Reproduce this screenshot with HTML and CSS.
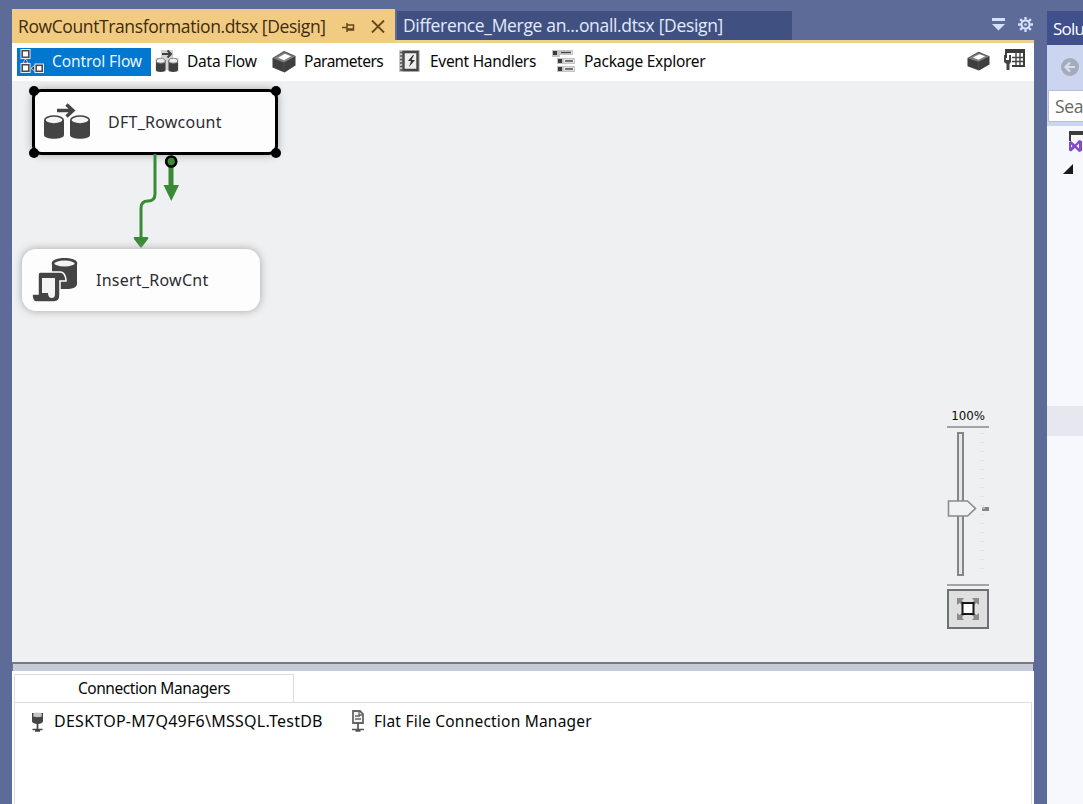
FILE: index.html
```html
<!DOCTYPE html>
<html lang="en">
<head>
<meta charset="utf-8">
<title>RowCountTransformation.dtsx [Design]</title>
<link rel="stylesheet" href="styles.css">
</head>
<body>
<svg class="defs" width="0" height="0" aria-hidden="true">
  <defs>
    <symbol id="box" viewBox="0 0 24 24">
      <path d="M.5 9 12 2l11.500 5v9.500l-11 7L.5 18.500z" fill="#3f3f3f"/>
      <path d="M1 9.300 12 3l11 4.500L12 13.500z" fill="#808080"/>
      <path d="M6 8.700 13 4.800l6 2.400-7 4z" fill="#fff"/>
      <path d="M12 13.500V23" stroke="#555" stroke-width=".7"/>
    </symbol>
    <symbol id="cylinders" viewBox="0 0 46 38">
      <path d="M0 17v15c0 5 20 5 20 0V17z" fill="#444"/>
      <ellipse cx="10" cy="17" rx="9.200" ry="4" fill="#f4f4f4" stroke="#444" stroke-width="1.600"/>
      <path d="M26 17v15c0 5 20 5 20 0V17z" fill="#444"/>
      <ellipse cx="36" cy="17" rx="9.200" ry="4" fill="#f4f4f4" stroke="#444" stroke-width="1.600"/>
      <path d="M13 7.500h15M22.500 1.500 29 7.500l-6.500 6" fill="none" stroke="#444" stroke-width="3.400"/>
    </symbol>
  </defs>
</svg>
<div class="ide">
  <main class="editor">
    <header class="tabs">
      <div class="tab active">
        <span class="title t1">RowCountTransformation.dtsx [Design]</span>
        <svg class="pin" width="13" height="11" viewBox="0 0 13 11"><path d="M0 5.500h5M5 1v9M5 3h6.500v5H5M5 7h7" fill="none" stroke="#664719" stroke-width="1.500"/></svg>
        <svg class="close" width="14" height="13" viewBox="0 0 14 13"><path d="m1 .5 12 12M13 .5l-12 12" stroke="#664719" stroke-width="1.900"/></svg>
      </div>
      <div class="tab inactive"><span class="title t2">Difference_Merge an...onall.dtsx [Design]</span></div>
      <div class="tab-actions">
        <svg width="13" height="13" viewBox="0 0 13 13"><path d="M0 0h13v3H0zM0 6h13l-6.500 6.500z" fill="#d4e0ff"/></svg>
        <svg width="15" height="15" viewBox="0 0 16 16"><g fill="none" stroke="#d4e0ff"><circle cx="8" cy="8" r="4.300" stroke-width="2.300"/><path d="M8 0v3M8 13v3M0 8h3M13 8h3M2.300 2.300l2.200 2.200M11.500 11.500l2.200 2.200M13.700 2.300l-2.200 2.200M4.500 11.500l-2.200 2.200" stroke-width="2.500"/></g><circle cx="8" cy="8" r="1.300" fill="#d4e0ff"/></svg>
      </div>
    </header>

    <nav class="toolbar">
      <div class="tool selected">
        <svg width="24" height="24" viewBox="0 0 24 24"><path d="M.5 0h10v10h-10zM.5 14h10v10h-10zM14.500 14.500h9.500V24h-9.500z" fill="#e4f1fa"/><path d="M2.200 1.700h6.600v6.600H2.200zM2.200 15.700h6.600v6.600H2.200zM16.200 16.200h6v6h-6z" fill="#fff" stroke="#4a4a4a" stroke-width="1.600"/><path d="M3 14l2.500-4L8 14zM14.500 16.500l-3.500 2.700 3.500 2.700z" fill="#333" stroke="#e4f1fa" stroke-width=".8"/></svg>
        <span class="tahoma w1">Control Flow</span>
      </div>
      <div class="tool flow">
        <svg width="24" height="24" viewBox="0 0 24 24"><path d="M6 1h12v8h5.500v13.500H13V21h-2v1.500H.5V9H6z" fill="#d2d2d2"/><path d="M1 11v10c0 2.500 9.500 2.500 9.500 0V11zM13.500 11v10c0 2.500 9.500 2.500 9.500 0V11z" fill="#3f3f3f"/><path d="M1.500 11.500c0-3 8.500-3 8.500 0v2q-4 1.500-8.500 0zM14 11.500c0-3 8.500-3 8.500 0v2q-4 1.500-8.500 0z" fill="#eee" stroke="#777" stroke-width=".9"/><path d="M7 5h9M12.500 1.500 16 5l-3.500 3.500" fill="none" stroke="#3f3f3f" stroke-width="2"/></svg>
        <span class="tahoma w2">Data Flow</span>
      </div>
      <div class="tool params"><svg width="24" height="24"><use href="#box"/></svg><span class="tahoma w3">Parameters</span></div>
      <div class="tool events">
        <svg width="21" height="22" viewBox="0 0 21 22"><path d="M0 0h21v22H0z" fill="#c8c8c8"/><path d="M4.500 2h14v18h-14z" fill="#eee" stroke="#444" stroke-width="2.400"/><path d="M1 2.500h4M1 6h4M1 9.500h4M1 13h4M1 16.500h4M1 20h4" stroke="#555" stroke-width="1.500"/><path d="m14 5-5 6h3l-2 6 6-7h-3.500L15 5z" fill="#333"/></svg>
        <span class="tahoma w4">Event Handlers</span>
      </div>
      <div class="tool explorer">
        <svg width="24" height="24" viewBox="0 0 24 24"><path d="M0 1h21v5H8v2H0zM5 9h18v6H5zM5 17h18v6H5z" fill="#c4c4c4"/><path d="M9 2.500h11v2H9zM12 10.500h10v3H12zM12 18.500h10v3H12z" fill="#f4f4f4"/><path d="M1 2h4v4H1zM6 10h4v4H6zM6 18h4v4H6z" fill="#3b3b3b"/><path d="M9 3.500h10M13 12h8M13 20h8" stroke="#444" stroke-width="1.300"/></svg>
        <span class="tahoma w5">Package Explorer</span>
      </div>
      <div class="right-tools">
        <svg width="23" height="21" viewBox="0 0 24 24" preserveAspectRatio="none"><use href="#box"/></svg>
        <svg width="21" height="22" viewBox="0 0 21 22"><path d="M1 0h20v18H8v-2h11V4H3v5H1z" fill="#3b3b3b"/><path d="M8 8.500h12M8 12.500h12M12 4v13M16 4v13" stroke="#444" stroke-width="1.400"/><path d="M0 6h2v5h3V6h2v7l-1.500 2v6h-3v-6L0 13z" fill="#444"/></svg>
      </div>
    </nav>

    <section class="canvas">
      <div class="node task-flow">
        <svg width="46" height="38"><use href="#cylinders"/></svg>
        <span class="tahoma n1">DFT_Rowcount</span>
        <i class="handle nw"></i><i class="handle ne"></i><i class="handle sw"></i><i class="handle se"></i>
      </div>
      <svg class="wires" width="60" height="96" viewBox="0 0 60 96">
        <path d="M25 0v40q0 7-7 7t-7 7v32" fill="none" stroke="#388a34" stroke-width="3"/>
        <path d="M5 83h12q2 0 1 2l-6 8q-1 1-2 0L4 85q-1-2 1-2z" fill="#388a34"/>
        <path d="M41 8v24" stroke="#388a34" stroke-width="5"/>
        <path d="M33.500 31h15.500l-7.700 16z" fill="#388a34"/>
        <circle cx="41.200" cy="7.500" r="5" fill="#388a34" stroke="#000" stroke-width="2.700"/>
      </svg>
      <div class="node task-sql">
        <svg width="46" height="44" viewBox="0 0 46 44">
          <path d="M20 5v12h8v14h6c7 0 11-2 11-5V5z" fill="#444"/>
          <ellipse cx="32.500" cy="5.500" rx="11.500" ry="4.300" fill="#f3f3f3" stroke="#444" stroke-width="2.600"/>
          <path d="M8 14h20c6 0 6 9 6 9h-6v14c0 4-2 7-6 7H4c-4 0-4-5-4-8h6V18q0-4 2-4z" fill="#444" stroke="#fff" stroke-width="1.500"/>
          <path d="M10 20h13v16q0 4-3 4-4 0-4-5h-6z" fill="#f3f3f5"/>
        </svg>
        <span class="tahoma n2">Insert_RowCnt</span>
      </div>
      <aside class="zoom">
        <span class="percent">100%</span>
        <svg width="42" height="160" viewBox="0 0 42 160">
          <path d="M0 1h42M0 159h42" stroke="#a4a4a4" stroke-width="2"/>
          <rect x="11" y="7" width="5" height="142" fill="#e5e6e8" stroke="#858585" stroke-width="2"/>
          <path d="M35 7v144" stroke="#dfe1e4" stroke-width="5" stroke-dasharray="1 8"/>
          <path d="M1.500 75h19l8 7.500-8 7.500h-19z" fill="#f1f2f4" stroke="#8b8b8b" stroke-width="1.600"/>
          <path d="M35 83h7" stroke="#858585" stroke-width="4"/><path d="M35 82h3" stroke="#ddd" stroke-width="1"/>
        </svg>
        <div class="fit"><svg width="24" height="24" viewBox="0 0 24 24"><path d="M1 8V1h7L6 3.500 8 6 6 8 3.500 6zM16 1h7v7l-2.500-2L18 8l-2-2 2-2.500zM1 16l2.500 2L6 16l2 2-2 2.500L8 23H1zM18 16l2.500 2 2.500-2v7h-7l2-2.500-2-2.500z" fill="#8b8b8b"/><path d="M6.500 6h11v11h-11z" fill="#fff" stroke="#171717" stroke-width="2"/></svg></div>
      </aside>
    </section>

    <div class="splitter"></div>
    <section class="connections">
      <div class="conn-tab"><span class="tahoma c0">Connection Managers</span></div>
      <div class="conn-list">
        <svg width="14" height="21" viewBox="0 0 14 21"><path d="M1 2v8c0 4 11 4 11 0V2z" fill="#444"/><path d="M2.300 2.500q4-2 8.500 0v3q-4 1.500-8.500 0z" fill="#c5c5c5"/><path d="M6.500 12v6M1.500 18.500h10M4 20h5" stroke="#444" stroke-width="1.700"/></svg>
        <span class="tahoma c1">DESKTOP-M7Q49F6\MSSQL.TestDB</span>
        <svg class="file" width="14" height="22" viewBox="0 0 14 22"><path d="M2 1h7l3 3v9H2z" fill="#f4f4f4" stroke="#666" stroke-width="1.800"/><path d="M4 6h5M4 9h6M8 2v3h3" fill="none" stroke="#666" stroke-width="1.300"/><path d="M7 13v6M1 19.500h12M4.500 21h5" stroke="#555" stroke-width="1.700"/></svg>
        <span class="tahoma c2">Flat File Connection Manager</span>
      </div>
    </section>
  </main>

  <aside class="solution">
    <div class="solution-title">Solu</div>
    <div class="solution-tools"><svg width="18" height="18" viewBox="0 0 18 18"><circle cx="9" cy="9" r="9" fill="#a5abbb"/><path d="M14 9H5M9 4.500 4.500 9 9 13.500" fill="none" stroke="#d6def4" stroke-width="2.200"/></svg></div>
    <div class="search">Sea</div>
    <div class="tree">
      <svg class="sln" width="20" height="22" viewBox="0 0 20 22"><path d="M0 0h20v4H2v6H0z" fill="#3b3b40"/><path d="m0 11 2-1 4 3.500L10 9l3 1v10l-3 1-4-4-4 3.500-2-1zm2 2.500v3l1.500-1.500zm8-1L7.500 15l2.500 2.500z" fill="#854cc7" fill-rule="evenodd"/></svg>
      <svg class="expander" width="10" height="10" viewBox="0 0 10 10"><path d="M10 0v10H0z" fill="#17181c"/></svg>
      <div class="tree-row"></div>
    </div>
  </aside>
</div>
</body>
</html>
```
FILE: styles.css
```css
* { box-sizing: border-box; }
body { margin: 0; background: #5d6b99; overflow: hidden; }
svg { display: block; flex: none; }
.defs { position: absolute; }
.ide { display: flex; gap: 13px; width: 1083px; height: 804px; padding-left: 12px; overflow: hidden; }
.editor { width: 1022px; flex: none; display: flex; flex-direction: column; }
.title, .solution-title, .search { font-family: "Open Sans", "Noto Sans", sans-serif; white-space: nowrap; }
.title { font-size: 17.5px; line-height: 28px; padding-bottom: 2px; }
.t1 { letter-spacing: -.39px; }
.t2 { letter-spacing: -.33px; }

.tabs { height: 43px; padding-top: 9px; display: flex; align-items: flex-start; border-bottom: 3px solid #eed093; flex: none; }
.tab { display: flex; align-items: center; flex: none; }
.active { width: 383px; height: 34px; background: #f2cb82; padding: 1px 10px 0 6px; color: #3d2c10; }
.active .title { width: 308px; }
.pin { margin-left: 16px; margin-top: 2px; }
.close { margin-left: 16px; }
.inactive { width: 395px; height: 29px; margin: 2px 0 0 2px; padding: 1px 0 0 6px; background: #3f5081; color: #e3eafc; }
.tab-actions { margin: 8px 0 0 auto; padding-right: 1px; display: flex; align-items: center; gap: 13px; }

.toolbar { height: 38px; flex: none; background: #fff; display: flex; align-items: center; padding: 0 9px 0 5px; }
.tahoma { font-family: "Noto Sans", "DejaVu Sans", sans-serif; font-size: 15.5px; white-space: nowrap; color: #080808; line-height: 26px; }
.tool { height: 28px; display: flex; align-items: center; padding-bottom: 2px; }
.selected { width: 134px; background: #0078d0; padding-left: 3px; gap: 8px; }
.selected .tahoma { color: #e9f5ff; }
.flow { width: 116px; padding-left: 4px; gap: 8px; }
.params { width: 129px; padding-left: 5px; gap: 8px; }
.events { width: 153px; padding-left: 3px; gap: 10px; }
.explorer { padding-left: 3px; gap: 8px; }
.w1 { letter-spacing: -.1px; }
.w2 { letter-spacing: -.22px; }
.w3 { letter-spacing: -.5px; }
.w4 { letter-spacing: -.3px; }
.w5 { letter-spacing: -.27px; }
.right-tools { margin-left: auto; display: flex; align-items: center; gap: 14px; padding-bottom: 4px; }

.canvas { position: relative; height: 581px; flex: none; background: #eef0f2; }
.node { position: absolute; display: flex; align-items: center; background: #fdfdfe; border-radius: 14px; box-shadow: 0 0 8px #a5a5a5; }
.task-flow { left: 20px; top: 8px; width: 246px; height: 66px; border: 3px solid #000; border-radius: 9px; padding-left: 9px; gap: 18px; }
.task-sql { left: 10px; top: 168px; width: 238px; height: 62px; padding-left: 10px; gap: 18px; }
.node .tahoma { color: #2c2c30; font-size: 16px; letter-spacing: .25px; }
.handle { position: absolute; width: 10px; height: 10px; border-radius: 50%; background: #000; }
.nw, .ne { top: -6px; }
.sw, .se { bottom: -6px; }
.nw, .sw { left: -6px; }
.ne, .se { right: -6px; }
.wires { position: absolute; left: 118px; top: 73px; }
.zoom { position: absolute; left: 935px; top: 326px; width: 42px; }
.percent { display: block; height: 19px; text-align: center; font: 11.8px/18px "DejaVu Sans", sans-serif; color: #080808; }
.fit { width: 42px; height: 40px; margin-top: 3px; border: 2px solid #707173; background: #dfdfdf; display: grid; place-items: center; }

.splitter { flex: none; height: 9px; background: #c7cad8; border: solid #7a7a7a; border-width: 2px 0 0 1px; margin-right: 1px; }
.connections { height: 133px; background: #fff; padding: 3px 2px 0; }
.conn-tab { width: 280px; height: 28px; border: 1px solid #ddd; border-bottom: 0; text-align: center; }
.conn-list { height: 104px; border: 1px solid #ddd; border-bottom: 0; display: flex; align-items: flex-start; padding: 5px 0 0 16px; }
.conn-list > svg { margin-top: 3px; }
.c0 { letter-spacing: -.42px; }
.c1 { width: 269px; margin-left: 9px; font-size: 16px; letter-spacing: .26px; }
.c2 { letter-spacing: .21px; }
.conn-list .file { margin: 2px 9px 0 28px; }

.solution { width: 36px; flex: none; padding-top: 11px; background: linear-gradient(#5d6b99 11px, #ccd5f0 11px); overflow: hidden; }
.solution-title { height: 34px; background: #40508d; color: #fff; font-size: 17px; line-height: 35px; padding-left: 6px; letter-spacing: -.8px; }
.solution-tools { height: 45px; padding: 13px 0 0 14px; }
.search { height: 32px; margin-left: 1px; padding-left: 6px; background: #fff; border: solid #b7bfd8; border-width: 1px 0 1px 1px; color: #666; font-size: 17.5px; line-height: 31px; letter-spacing: -.3px; }
.tree { height: 700px; margin-top: 4px; background: #f6f8fe; padding-top: 5px; }
.sln { margin-left: 22px; }
.expander { margin: 11px 0 0 16px; }
.tree-row { height: 30px; margin-top: 232px; background: #e6e7ef; }
```
